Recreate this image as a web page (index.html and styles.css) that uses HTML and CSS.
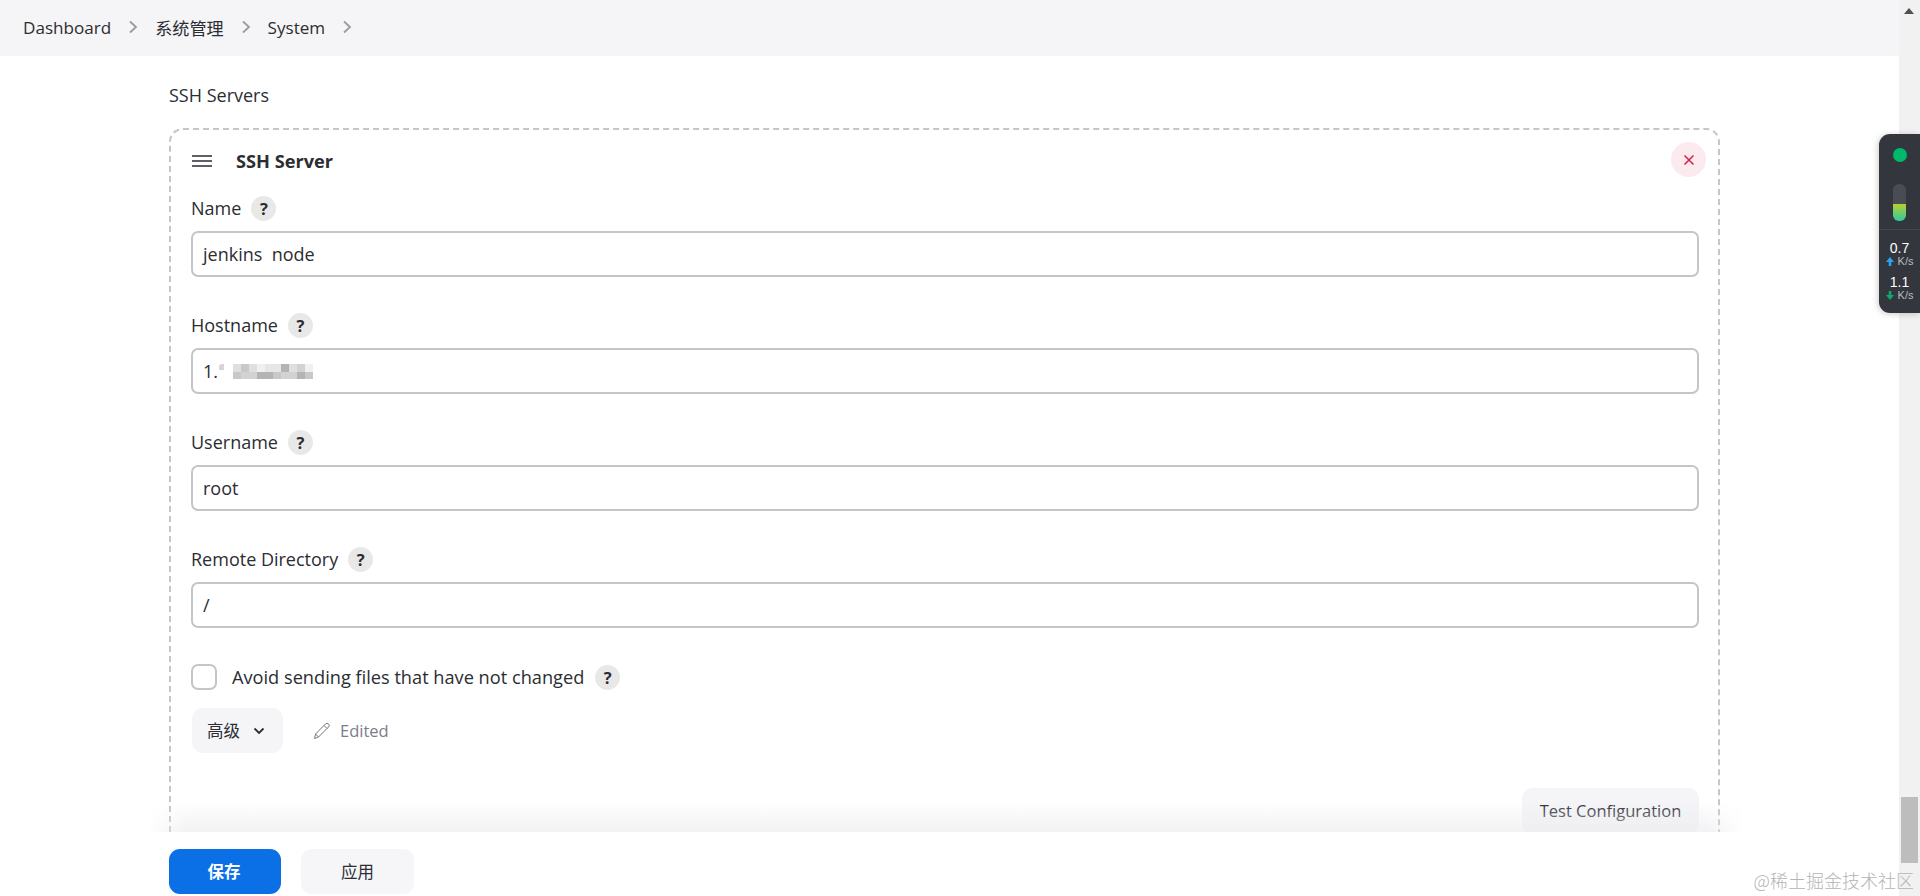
FILE: index.html
```html
<!DOCTYPE html>
<html lang="zh-CN">
<head>
<meta charset="utf-8">
<title>System - Jenkins</title>
<link rel="stylesheet" href="styles.css">
</head>
<body>
<div class="page">
  <header class="topbar">
    <nav class="crumbs">
      <a class="crumb">Dashboard</a>
      <svg class="chev" viewBox="0 0 10 14"><path d="M2 1.500 8 7l-6 5.500"/></svg>
      <a class="crumb">系统管理</a>
      <svg class="chev" viewBox="0 0 10 14"><path d="M2 1.500 8 7l-6 5.500"/></svg>
      <a class="crumb">System</a>
      <svg class="chev" viewBox="0 0 10 14"><path d="M2 1.500 8 7l-6 5.500"/></svg>
    </nav>
  </header>
  <main class="content">
    <div class="section-title">SSH Servers</div>
    <section class="card">
      <div class="card-head">
        <svg class="handle" viewBox="0 0 20 12"><path d="M0 1h20M0 6h20M0 11h20"/></svg>
        <strong class="card-title">SSH Server</strong>
        <button class="close"><svg viewBox="0 0 12 12"><path d="M1.500 1.500l9 9M10.500 1.500l-9 9"/></svg></button>
      </div>
      <div class="field">
        <label class="label"><span class="label-text">Name</span> <span class="help">?</span></label>
        <div class="input">jenkins&nbsp; node</div>
      </div>
      <div class="field">
        <label class="label"><span class="label-text">Hostname</span> <span class="help">?</span></label>
        <div class="input">1.<span class="speck"></span><span class="mosaic"><i class="s2"></i><i class="s4"></i><i class="s4"></i><i class="s1"></i><i class="s2"></i><i class="s1"></i><i class="s5"></i><i class="s3"></i><i class="s6"></i><i class="s3"></i><i class="s6"></i><i class="s4"></i><i class="s3"></i><i class="s1"></i><i class="s2"></i><i class="s1"></i><i class="s1"></i><i class="s3"></i><i class="s5"></i><i class="s4"></i></span></div>
      </div>
      <div class="field">
        <label class="label"><span class="label-text">Username</span> <span class="help">?</span></label>
        <div class="input">root</div>
      </div>
      <div class="field">
        <label class="label"><span class="label-text">Remote Directory</span> <span class="help">?</span></label>
        <div class="input">/</div>
      </div>
      <div class="check-row">
        <span class="checkbox"></span>
        <span class="check-label">Avoid sending files that have not changed</span>
        <span class="help">?</span>
      </div>
      <div class="adv-row">
        <button class="btn adv">高级 <svg class="down" viewBox="0 0 12 8"><path d="M1.500 1.500 6 6l4.500-4.500"/></svg></button>
        <span class="edited">
          <svg class="pencil" viewBox="0 0 18 18"><path d="M1.500 16.500l1-4.500L12.500 2a2 2 0 0 1 3 0 2 2 0 0 1 0 3l-10 10zM2.500 12l3 3M11 3.500l3 3"/></svg>
          Edited
        </span>
      </div>
      <div class="test-row"><button class="btn test">Test Configuration</button></div>
    </section>
  </main>
  <footer class="bottom">
    <button class="btn save">保存</button>
    <button class="btn apply">应用</button>
  </footer>
</div>
<aside class="scrollbar">
  <svg class="scroll-up" viewBox="0 0 10 6"><path d="M5 0l5 6H0z"/></svg>
  <div class="thumb"></div>
</aside>
<aside class="monitor">
  <div class="dot-wrap"><span class="dot"></span></div>
  <div class="tube-wrap"><div class="tube"><div class="tube-fill"></div></div></div>
  <div class="rate first">
    <div class="num">0.7</div>
    <div class="unit"><svg class="arrow up" viewBox="0 0 8 9"><path d="M4 0l4 5H5.300v4H2.700V5H0z"/></svg>K/s</div>
  </div>
  <div class="rate">
    <div class="num">1.1</div>
    <div class="unit"><svg class="arrow dn" viewBox="0 0 8 9"><path d="M4 9L0 4h2.700V0h2.600v4H8z"/></svg>K/s</div>
  </div>
</aside>
<div class="watermark">@稀土掘金技术社区</div>
</body>
</html>
```
FILE: styles.css
```css
* { box-sizing: border-box; }
html, body { margin: 0; height: 896px; overflow: hidden; background: #fff; }
body {
  display: flex;
  position: relative;
  font-family: "Open Sans", "Noto Sans CJK SC", sans-serif;
  font-size: 18px;
  color: #2b2d33;
}
.page { flex: 1; min-width: 0; height: 896px; position: relative; overflow: hidden; }
.scrollbar { width: 21px; height: 896px; background: #f1f1f1; padding: 8px 2px 0; }
.scroll-up { display: block; width: 10px; height: 6px; margin: 0 0 0 3px; fill: #505050; }
.thumb { height: 66px; margin-top: 783px; background: #bdbdbd; }
.topbar { height: 56px; background: #f5f5f7; padding: 0 0 2px 23px; display: flex; align-items: center; }
.crumbs { display: flex; align-items: center; }
.crumb { color: #2b2d33; font-size: 17.100px; }
.chev { width: 10px; height: 14px; margin: 0 17px; fill: none; stroke: #9a9ba1; stroke-width: 1.800; }
.content { padding: 28px 179px 0 169px; }
.section-title { height: 44px; line-height: 22px; }
.card {
  border: 2px dashed #c4c6c9;
  border-radius: 14px;
  padding: 0 19px 0 20px;
  height: 760px;
}
.card-head { height: 66px; padding-bottom: 4px; display: flex; align-items: center; position: relative; }
.handle { width: 20px; height: 12px; stroke: #2b2d33; stroke-width: 1.700; fill: none; margin: 0 24px 0 1px; }
.card-title { font-weight: 700; font-size: 18.200px; }
.close {
  position: absolute; right: -7px; top: 12px; width: 35px; height: 35px;
  border: 0; border-radius: 50%; background: #fbebee; padding: 0;
  display: flex; align-items: center; justify-content: center;
}
.close svg { width: 12px; height: 12px; stroke: #d81f47; stroke-width: 1.500; fill: none; }
.field { height: 117px; }
.label { display: flex; align-items: center; gap: 10px; height: 25px; }
.label-text { padding-bottom: 2px; }
.help {
  width: 25px; height: 25px; border-radius: 50%; background: #e8e8e9;
  display: inline-flex; align-items: center; justify-content: center;
  font-weight: 700; font-size: 16.500px; color: #2b2d33;
}
.input {
  margin-top: 10px; height: 46px; border: 2px solid #c3c6c8; border-radius: 7px;
  padding: 0 10px; display: flex; align-items: center; color: #2b2d33;
}
.speck { width: 5px; height: 6px; margin: -8px 0 0 1px; background: #d6d6d8; border-radius: 3px 0 0 0; }
.mosaic {
  display: grid; grid-auto-flow: column; grid-template-rows: 8px 7px; grid-auto-columns: 8px;
  margin-left: 9px;
}
.mosaic i { display: block; }
.s1 { background: #d2d2d3; } .s2 { background: #dfdfe0; } .s3 { background: #b4b4b6; }
.s4 { background: #c8c8ca; } .s5 { background: #f0f0f0; } .s6 { background: #e6e6e6; }
.check-row { display: flex; align-items: center; height: 26px; }
.checkbox { width: 26px; height: 26px; border: 2px solid #c3c6c8; border-radius: 7px; margin-right: 15px; background: #fff; }
.check-label { margin-right: 11px; font-size: 18.200px; }
.adv-row { display: flex; align-items: center; margin-top: 18px; }
.btn { border: 0; font-family: inherit; font-size: 16.500px; color: #2b2d33; border-radius: 11px; padding-bottom: 3px; }
.adv { width: 91px; height: 45px; margin-left: 1px; padding-left: 15px; background: #f5f5f8; display: flex; align-items: center; gap: 13px; }
.down { width: 12px; height: 8px; margin-top: 3px; fill: none; stroke: #2b2d33; stroke-width: 1.800; }
.edited { display: flex; align-items: center; gap: 9px; margin-left: 30px; color: #7d7d8c; font-size: 16.500px; }
.pencil { width: 18px; height: 18px; fill: none; stroke: #77777f; stroke-width: 1; }
.test-row { display: flex; justify-content: flex-end; margin-top: 35px; }
.test { width: 177px; height: 46px; background: #f5f5f8; }
.bottom {
  position: absolute; left: 0; right: 0; bottom: 0; height: 64px; background: #fff;
  padding: 17px 0 0 169px; display: flex; gap: 20px; align-items: flex-start;
}
.bottom::before {
  content: ""; position: absolute; left: 147px; right: 154px; top: -30px; height: 30px;
  background: linear-gradient(to bottom, rgba(235,235,238,0), rgba(235,235,238,.65));
  -webkit-mask-image: linear-gradient(to right, transparent, #000 40px, #000 calc(100% - 40px), transparent);
  mask-image: linear-gradient(to right, transparent, #000 40px, #000 calc(100% - 40px), transparent);
}
.save { width: 112px; height: 45px; background: #0b6fe6; color: #fff; font-weight: 700; padding-right: 8px; }
.apply { width: 113px; height: 45px; background: #f6f6f8; }
.monitor {
  position: absolute; left: 1879px; top: 134px; width: 41px; height: 179px;
  background: #33363d; border-radius: 11px 0 0 11px; box-shadow: -1px 1px 6px rgba(0,0,0,.2);
  color: #fff; font-family: "Liberation Sans", sans-serif;
}
.dot-wrap { height: 42px; display: flex; justify-content: center; align-items: center; }
.dot { width: 14px; height: 14px; border-radius: 50%; background: #00b96b; }
.tube-wrap { height: 54px; border-bottom: 1px solid #44474e; display: flex; justify-content: center; padding-top: 8px; }
.tube { width: 13px; height: 37px; border-radius: 6px; background: #494c55; overflow: hidden; padding-top: 20px; }
.tube-fill { height: 17px; background: linear-gradient(#b6d02f, #2fc9a0); }
.rate { height: 34px; padding-top: 9px; text-align: center; }
.rate.first { height: 37px; padding-top: 12px; }
.num { font-size: 14px; line-height: 13px; }
.unit { font-size: 11px; line-height: 12px; color: #b9bbc0; display: flex; align-items: center; justify-content: center; gap: 4px; }
.arrow { width: 8px; height: 9px; }
.arrow.up { fill: #27a4f2; }
.arrow.dn { fill: #10a86f; }
.watermark {
  position: absolute; right: 6px; bottom: 4px; font-family: "Noto Sans CJK SC", sans-serif;
  font-size: 18px; line-height: 24px; color: #b4b4b4; font-weight: 300;
}
```
